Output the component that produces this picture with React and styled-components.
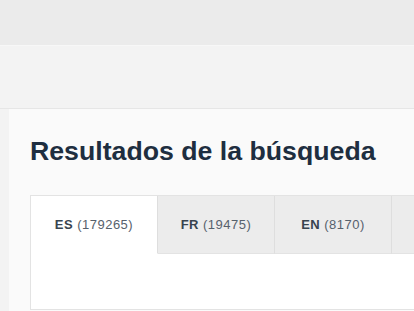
import React from 'react'
import styled, { createGlobalStyle } from 'styled-components'

const Global = createGlobalStyle`
  html, body { margin: 0; padding: 0; background: #f6f6f6; }
  body { font-family: "Liberation Sans", Arial, sans-serif; }
`

const tabs = [
    { code: 'ES', count: '179265', active: true },
    { code: 'FR', count: '19475' },
    { code: 'EN', count: '8170' },
    { code: 'IT', count: '4512' },
]

function App() {
    return (
        <Page>
            <Global />
            <TopBar />
            <SubBar />
            <Main>
                <Panel>
                    <Title>Resultados de la búsqueda</Title>
                    <TabBox>
                        <TabRow>
                            {tabs.map(t => (
                                <Tab key={t.code} active={t.active}>
                                    <b>{t.code}</b> ({t.count})
                                </Tab>
                            ))}
                        </TabRow>
                        <TabBody />
                    </TabBox>
                </Panel>
            </Main>
        </Page>
    )
}

export default App

const Page = styled.div`
    width: 414px;
    height: 311px;
    overflow: hidden;
    display: flex;
    flex-direction: column;
`

const TopBar = styled.div`
    height: 45px;
    background: #ebebeb;
    flex-shrink: 0;
`

const SubBar = styled.div`
    height: 62px;
    background: #f3f3f3;
    border-top: 1px solid #f7f7f7;
    border-bottom: 1px solid #e6e6e6;
    flex-shrink: 0;
`

const Main = styled.div`
    flex: 1;
    background: #f3f3f3;
    padding-left: 9px;
`

const Panel = styled.div`
    background: #fafafa;
    height: 100%;
    padding: 23px 0 0 21px;
    box-sizing: border-box;
`

const Title = styled.h1`
    margin: 0;
    font-size: 26.7px;
    font-weight: bold;
    color: #1e2e40;
    line-height: 38px;
`

const TabBox = styled.div`
    margin-top: 25px;
    border: 1px solid #e3e3e3;
    border-right: none;
    background: #fff;
`

const TabRow = styled.div`
    display: flex;
    height: 58px;
`

const Tab = styled.div`
    width: ${p => (p.active ? '127px' : '117px')};
    flex-shrink: 0;
    display: flex;
    align-items: center;
    justify-content: center;
    white-space: nowrap;
    font-size: 13px;
    letter-spacing: 0.5px;
    color: #56616c;
    background: ${p => (p.active ? '#fff' : '#ececec')};
    border-right: 1px solid #dedede;
    border-bottom: 1px solid ${p => (p.active ? '#fff' : '#e3e3e3')};
    box-sizing: border-box;
    & b { margin-right: 4px; color: #38444f; }
`

const TabBody = styled.div`
    height: 55px;
    background: #fff;
`
